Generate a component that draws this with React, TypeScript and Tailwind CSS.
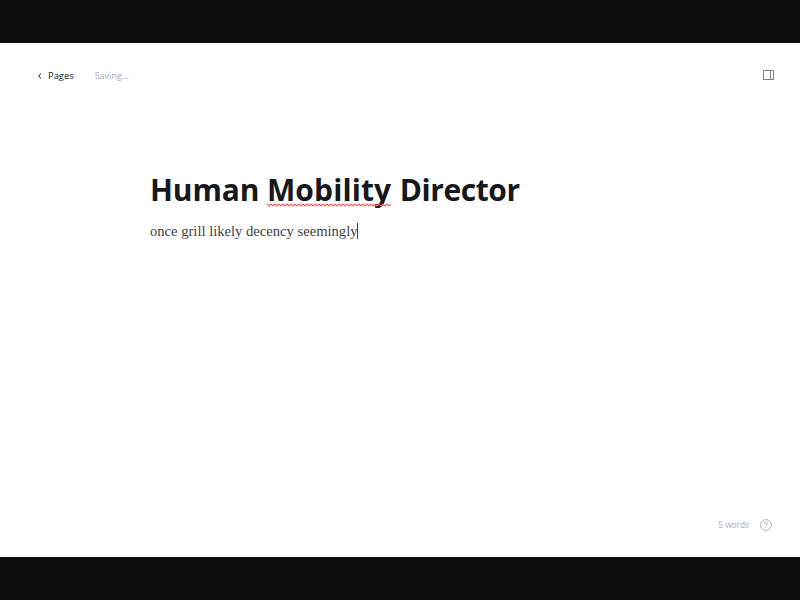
import React from 'react';

const Squiggle: React.FC = () => (
  <svg className="absolute left-0 top-[34px]" width="124" height="4" viewBox="0 0 124 4">
    <path
      d={'M0 1 ' + Array.from({ length: 62 }, (_, i) => `l2 ${i % 2 === 0 ? 2 : -2}`).join(' ')}
      fill="none"
      stroke="#f4606a"
      strokeWidth="1.2"
    />
  </svg>
);

const App: React.FC = () => {
  return (
    <div className="flex h-[600px] w-[800px] flex-col overflow-hidden bg-[#0e0e0e] font-['Open_Sans',sans-serif]">
      <div className="h-[43px] shrink-0" />

      <div className="flex h-[514px] flex-col bg-white">
        {/* Top bar */}
        <div className="flex h-[66px] shrink-0 items-center justify-between pl-[37px] pr-[25px]">
          <div className="flex items-center">
            <svg width="6" height="8" viewBox="0 0 6 8" fill="none" stroke="#374151" strokeWidth="1.1">
              <path d="M4 1.500 1.700 4 4 6.500" />
            </svg>
            <span className="ml-[5px] text-[9.4px] font-medium text-[#111827]">Pages</span>
            <span className="ml-[21px] text-[9px] text-[#a3acb9]">Saving...</span>
          </div>
          <svg className="mr-px -translate-y-px" width="11" height="11" viewBox="0 0 11 11" fill="none" stroke="#7b8290" strokeWidth="1">
            <rect x="0.500" y="0.500" width="10" height="9" />
            <path d="M7.500 0.500v9" />
          </svg>
        </div>

        {/* Editor */}
        <div className="flex-1 pl-[150px] pt-[60px]">
          <h1 className="text-[30px] font-bold leading-[42px] tracking-[-0.13px] text-[#16181d]">
            Human <span className="relative inline-block tracking-[0.1px]">Mobility<Squiggle /></span>{' '}
            <span className="ml-px tracking-[-0.45px]">Director</span>
          </h1>
          <p className="mt-[9px] flex font-['Liberation_Serif',serif] text-[14.6px] leading-[22px] text-[#3f4248]">
            once grill likely decency seemingly
            <span className="h-[16px] w-px self-center bg-[#444]" />
          </p>
        </div>

        {/* Footer */}
        <div className="flex h-[38px] shrink-0 items-start justify-end pr-[28px]">
          <div className="flex items-center">
            <span className="text-[8.3px] text-[#a3acb9]">5 words</span>
            <svg className="ml-[11px]" width="12" height="12" viewBox="0 0 12 12" fill="none" stroke="#a3acb9" strokeWidth="0.9">
              <circle cx="6" cy="6" r="5.400" />
              <path d="M4.500 4.800a1.500 1.500 0 1 1 2.300 1.300c-.5.300-.8.600-.8 1.100M6 8.300v.8" />
            </svg>
          </div>
        </div>
      </div>

      <div className="flex-1" />
    </div>
  );
};

export default App;
